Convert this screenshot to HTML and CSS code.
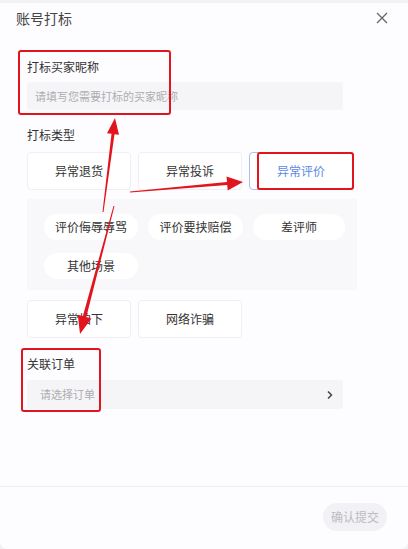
FILE: index.html
```html
<!DOCTYPE html>
<html lang="zh-CN">
<head>
    <meta charset="UTF-8">
    <meta name="viewport" content="width=device-width, initial-scale=1.0">
    <title>账号打标</title>
    <link rel="stylesheet" href="styles.css">
</head>
<body>
    <div class="modal">
        <div class="modal-header">
            <h2 class="modal-title">账号打标</h2>
            <svg class="close-icon" width="12" height="12" viewBox="0 0 12 12">
                <path d="M1 1L11 11M11 1L1 11" stroke="#666" stroke-width="1.3" fill="none"/>
            </svg>
        </div>

        <div class="modal-body">
            <div class="field">
                <div class="field-label">打标买家昵称</div>
                <div class="text-input">请填写您需要打标的买家昵称</div>
            </div>

            <div class="field field-type">
                <div class="field-label">打标类型</div>
                <div class="type-row">
                    <div class="type-btn">异常退货</div>
                    <div class="type-btn">异常投诉</div>
                    <div class="type-btn active">异常评价</div>
                </div>
                <div class="sub-panel">
                    <div class="chip">评价侮辱辱骂</div>
                    <div class="chip">评价要挟赔偿</div>
                    <div class="chip">差评师</div>
                    <div class="chip">其他场景</div>
                </div>
                <div class="type-row">
                    <div class="type-btn">异常拍下</div>
                    <div class="type-btn">网络诈骗</div>
                </div>
            </div>

            <div class="field field-order">
                <div class="field-label">关联订单</div>
                <div class="text-input select-input">
                    <span>请选择订单</span>
                    <svg width="8" height="10" viewBox="0 0 8 10">
                        <path d="M2 1.5L5.5 5L2 8.5" stroke="#444" stroke-width="1.5" fill="none"/>
                    </svg>
                </div>
            </div>
        </div>

        <div class="modal-footer">
            <div class="submit-btn">确认提交</div>
        </div>

        <!-- annotation marks drawn over the screenshot -->
        <svg class="annotations" width="408" height="549" viewBox="0 0 408 549">
            <g fill="none" stroke="#e2151f" stroke-width="2">
                <rect x="19" y="51" width="151" height="63" rx="2"/>
                <rect x="258" y="153" width="95" height="36" rx="2"/>
                <rect x="22" y="349" width="78" height="62" rx="2"/>
            </g>
            <g fill="#e2151f">
                <polygon points="102.5,212 111.5,133.8 107,133.2 115,118 119,134.8 114.5,134.2 103.5,212"/>
                <polygon points="113.5,206 82.9,316.1 77.8,314.8 80,334 91.4,318.4 86.3,317.1 114.5,206"/>
                <polygon points="130,191.5 227,181.9 226.5,176.4 243,182 227.7,190.4 227.2,184.9 130,192.5"/>
            </g>
        </svg>
    </div>
</body>
</html>
```

FILE: styles.css
```css
* {
    box-sizing: border-box;
    margin: 0;
    padding: 0;
}

body {
    font-family: "Noto Sans CJK SC", "Noto Sans", sans-serif;
    background: #f2f2f4;
    color: #333;
}

.modal {
    position: relative;
    width: 408px;
    height: 546px;
    margin-top: 3px;
    background: #fdfcfe;
    border-radius: 0 0 8px 8px;
    display: flex;
    flex-direction: column;
    overflow: hidden;
}

.modal-header {
    display: flex;
    justify-content: space-between;
    align-items: center;
    padding: 0 20px 0 16px;
    height: 30px;
}

.modal-title {
    font-size: 14px;
    font-weight: 400;
    line-height: 16px;
    color: #444;
}

.close-icon {
    margin-top: -1px;
}

.modal-body {
    padding: 27px 0 0 27px;
}

.field-label {
    font-size: 12px;
    line-height: 14px;
    color: #333;
}

.text-input {
    width: 316px;
    height: 28px;
    margin-top: 8px;
    padding-left: 8px;
    background: #f5f5f7;
    border-radius: 3px;
    font-size: 11px;
    line-height: 28px;
    color: #adadb2;
}

.field-type {
    margin-top: 18px;
}

.type-row {
    display: flex;
    gap: 7px;
    margin-top: 10px;
}

.type-btn {
    width: 104px;
    height: 38px;
    border: 1px solid #efeef2;
    border-radius: 4px;
    background: #fff;
    font-size: 12px;
    line-height: 36px;
    text-align: center;
    color: #333;
}

.type-btn.active {
    border-color: #a9bff0;
    color: #5d86e4;
}

.sub-panel {
    width: 330px;
    margin-top: 9px;
    padding: 15px 0 11px 17px;
    background: #f8f7fa;
    display: grid;
    grid-template-columns: 94px 95px 92px;
    column-gap: 10px;
    row-gap: 13px;
}

.chip {
    height: 26px;
    border-radius: 13px;
    background: #fff;
    font-size: 12px;
    line-height: 26px;
    text-align: center;
    color: #333;
}

.field-order {
    margin-top: 19px;
}

.field-order .text-input {
    margin-top: 9px;
    height: 29px;
    line-height: 29px;
}

.select-input {
    display: flex;
    justify-content: space-between;
    align-items: center;
    padding: 0 9px 0 13px;
}

.modal-footer {
    margin-top: auto;
    height: 63px;
    border-top: 1px solid #efedf1;
    display: flex;
    justify-content: flex-end;
    align-items: flex-start;
    padding: 16px 21px 0 0;
}

.submit-btn {
    width: 64px;
    height: 28px;
    border-radius: 14px;
    background: #f2f1f5;
    font-size: 12px;
    line-height: 28px;
    text-align: center;
    color: #bdbcc2;
}

.annotations {
    position: absolute;
    top: -3px;
    left: 0;
    pointer-events: none;
}
```
